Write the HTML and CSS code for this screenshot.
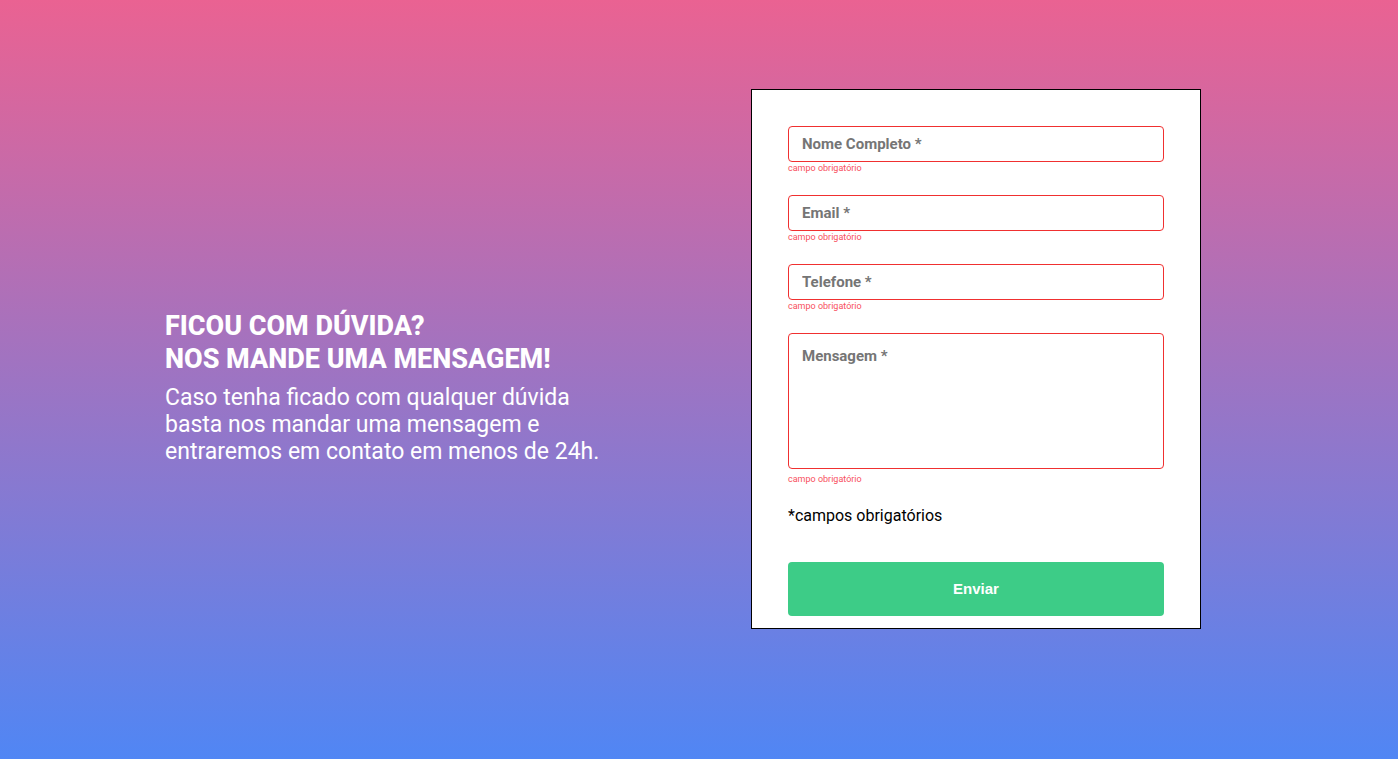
FILE: index.html
```html
<!DOCTYPE html>
<html lang="pt-BR">
<head>
<meta charset="utf-8">
<meta name="viewport" content="width=device-width, initial-scale=1">
<title>Contato</title>
<link rel="stylesheet" href="styles.css">
</head>
<body>
<main class="contact">
  <section class="intro">
    <h1 class="intro-title">FICOU COM DÚVIDA?<br>NOS MANDE UMA MENSAGEM!</h1>
    <p class="intro-text">Caso tenha ficado com qualquer dúvida basta nos mandar uma mensagem e entraremos em contato em menos de 24h.</p>
  </section>
  <form class="form" novalidate>
    <div class="field">
      <input class="control" type="text" id="nome" placeholder="Nome Completo *" aria-label="Nome Completo" aria-describedby="nome-erro">
      <span class="error" id="nome-erro">campo obrigatório</span>
    </div>
    <div class="field">
      <input class="control" type="email" id="email" placeholder="Email *" aria-label="Email" aria-describedby="email-erro">
      <span class="error" id="email-erro">campo obrigatório</span>
    </div>
    <div class="field">
      <input class="control" type="tel" id="telefone" placeholder="Telefone *" aria-label="Telefone" aria-describedby="telefone-erro">
      <span class="error" id="telefone-erro">campo obrigatório</span>
    </div>
    <div class="field field-message">
      <textarea class="control message" id="mensagem" placeholder="Mensagem *" aria-label="Mensagem" aria-describedby="mensagem-erro"></textarea>
      <span class="error" id="mensagem-erro">campo obrigatório</span>
    </div>
    <p class="note">*campos obrigatórios</p>
    <button class="submit" type="submit">Enviar</button>
  </form>
</main>
</body>
</html>
```
FILE: styles.css
```css
* {
  box-sizing: border-box;
  margin: 0;
  padding: 0;
}

body {
  font-family: Roboto, sans-serif;
  background: linear-gradient(#ea6292, #5086f4);
  min-height: 100vh;
}

.contact {
  min-height: 100vh;
  display: flex;
  flex-wrap: wrap;
  align-items: center;
  justify-content: center;
  gap: 150px;
  padding: 20px 52px 62px 20px;
}

.intro {
  max-width: 436px;
  padding-top: 58px;
  color: #fff;
}

.intro-title {
  font-size: 27px;
  line-height: 33px;
  font-weight: 800;
  margin-bottom: 8px;
}

.intro-text {
  font-size: 23px;
  line-height: 27px;
}

.form {
  width: 100%;
  max-width: 450px;
  display: flex;
  flex-direction: column;
  padding: 36px 36px 12px;
  border: 1px solid #000;
  background: #fff;
}

.field {
  display: flex;
  flex-direction: column;
  margin-bottom: 21px;
}

.control {
  width: 100%;
  height: 36px;
  padding: 0 13px;
  border: 1px solid #f03030;
  border-radius: 4px;
  font: 700 15px/18px Roboto, sans-serif;
  background: #fff;
}

.control::placeholder {
  color: #757575;
}

.message {
  height: 136px;
  padding-top: 13px;
  resize: none;
}

.error {
  font-size: 9px;
  line-height: 12px;
  color: #f85060;
}

.field-message {
  gap: 4px;
}

.note {
  font-size: 16px;
  line-height: 20px;
  margin-bottom: 36px;
}

.submit {
  height: 54px;
  border: 0;
  border-radius: 4px;
  background: #3dcc87;
  color: #fff;
  font: 700 15px/18px "Liberation Sans", Arial, sans-serif;
  cursor: pointer;
}
```
